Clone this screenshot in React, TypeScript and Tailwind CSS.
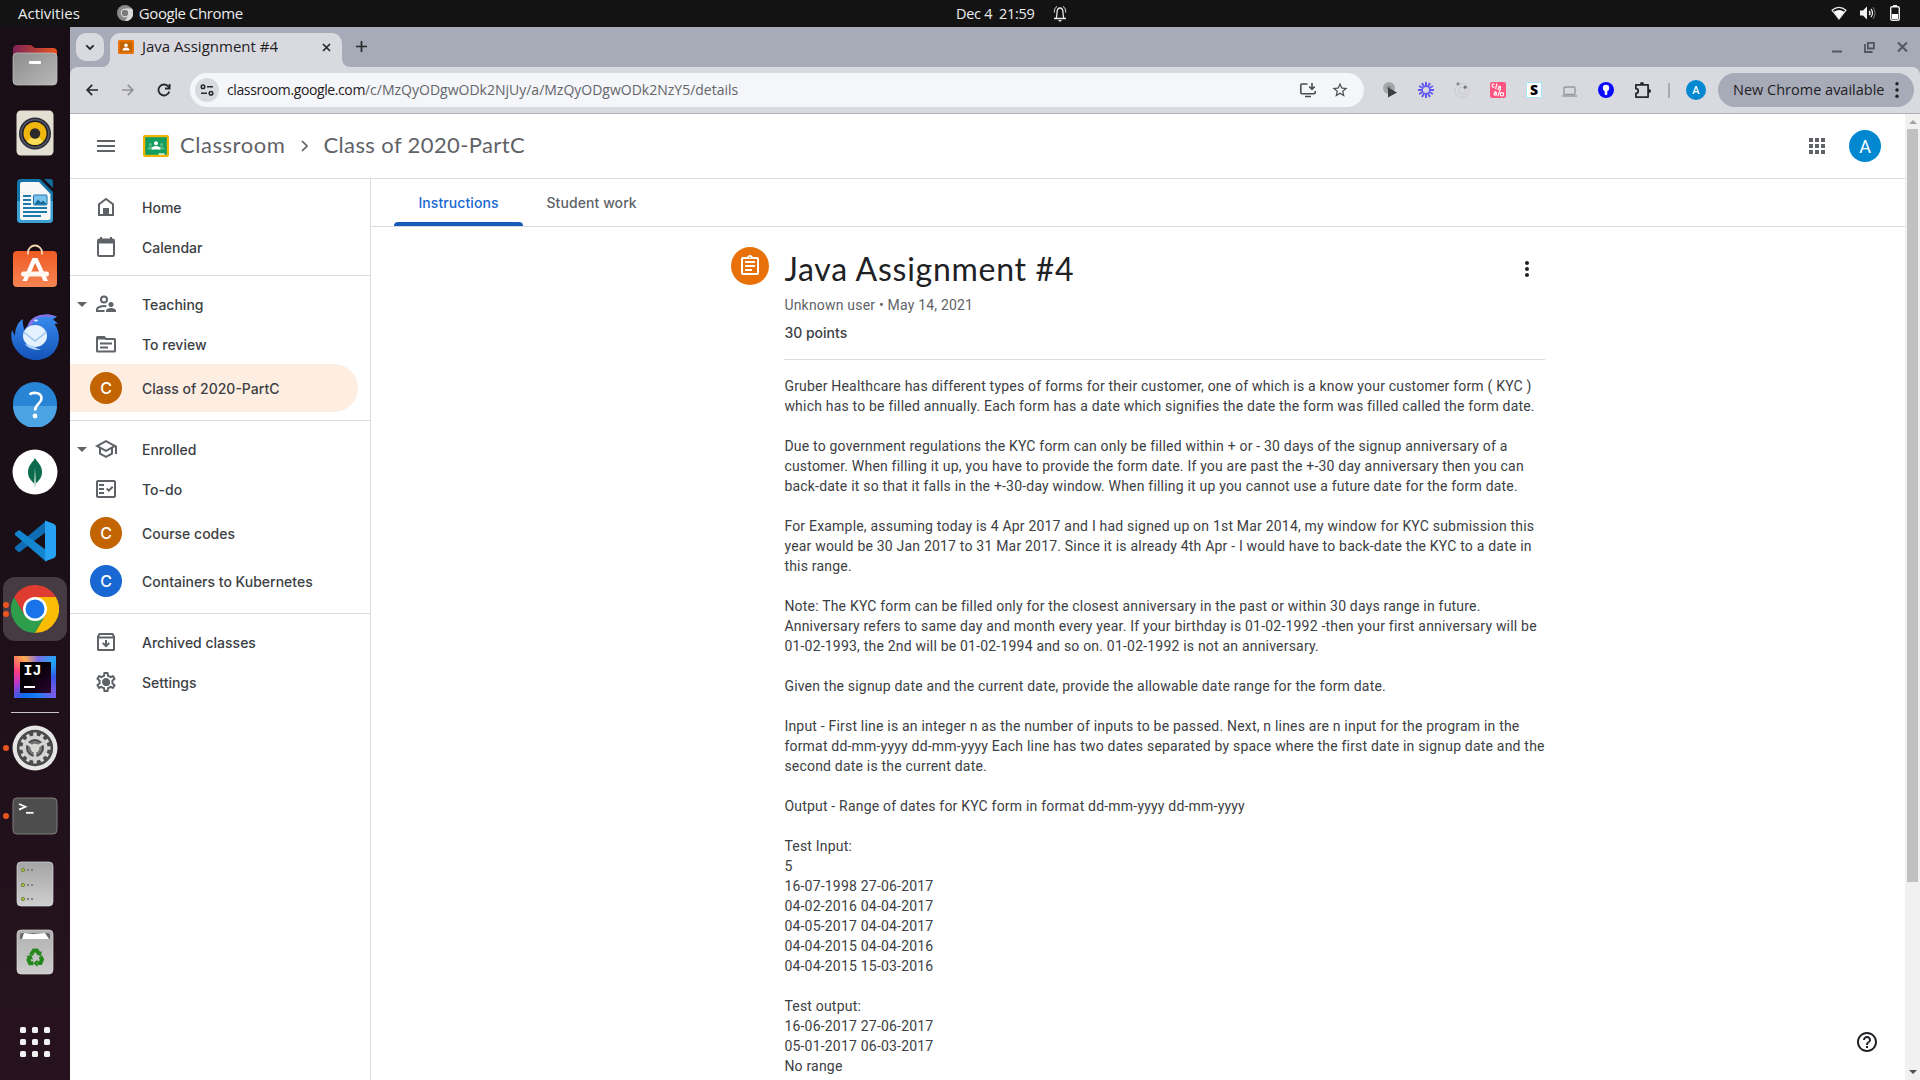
import React from "react";
import {
  MdApps,
  MdMenu,
  MdMoreVert,
  MdOutlineAssignment,
  MdOutlineFactCheck,
  MdOutlineSchool,
  MdOutlineSettings,
  MdStarOutline,
  MdHelpOutline,
  MdArrowDropDown,
} from "react-icons/md";

/* ---------- Dock ---------- */

function FilesIcon() {
  return (
    <svg width="46" height="42" viewBox="0 0 46 42">
      <defs>
        <linearGradient id="fi1" x1="0" x2="1"><stop offset="0" stopColor="#7d2357" /><stop offset="1" stopColor="#ea5420" /></linearGradient>
        <linearGradient id="fi2" x1="0" y1="0" x2="1" y2="1"><stop offset="0" stopColor="#8c8c8c" /><stop offset="1" stopColor="#b9b9b9" /></linearGradient>
      </defs>
      <path d="M1 5q0-4 4-4h13q2 0 3 1.500t3 1.500h17q4 0 4 4v14H1z" fill="url(#fi1)" />
      <rect x="1" y="9" width="44" height="32" rx="4" fill="url(#fi2)" stroke="#c4c4c4" strokeWidth=".7" />
      <rect x="17" y="17" width="12" height="3" rx="1" fill="#fff" />
    </svg>
  );
}

function SpeakerIcon() {
  return (
    <svg width="38" height="46" viewBox="0 0 38 46">
      <rect x=".5" y=".5" width="37" height="45" rx="4.500" fill="#e3dfd2" />
      <circle cx="19" cy="23.500" r="16" fill="#2c2d3a" />
      <circle cx="19" cy="23.500" r="14.500" fill="#555767" />
      <circle cx="19" cy="23.500" r="13" fill="#1d1e28" />
      <circle cx="19" cy="23.500" r="11.500" fill="#efb70e" />
      <path d="M11 31.500a11.500 11.500 0 0 0 16 0L19 23.500z" fill="#fadb55" />
      <circle cx="19" cy="23.500" r="5.200" fill="#2a2a2a" />
    </svg>
  );
}

function WriterIcon() {
  return (
    <svg width="38" height="46" viewBox="0 0 38 46">
      <path d="M5 1h19l13 13v27q0 4-4 4H5q-4 0-4-4V5q0-4 4-4z" fill="#1474a8" />
      <path d="M1 23h36v18q0 4-4 4H5q-4 0-4-4z" fill="#3ba0d2" />
      <path d="M28 1h6q3 0 3 3v6z" fill="#136a9a" />
      <path d="M6 4h17l11.500 12v24q0 2-2 2H6q-2 0-2-2V6q0-2 2-2z" fill="#f7f7f7" />
      <path d="M7 18h8M7 22h8M7 26h8M7 30h24M7 34h24M7 38h18" stroke="#1b79ad" strokeWidth="2" />
      <rect x="17.500" y="17" width="13.500" height="10" rx="1" fill="#7cc4ec" stroke="#1b79ad" />
      <path d="M18 26.500l4-5 3 3 2-2 4 4z" fill="#14699c" />
    </svg>
  );
}

function SoftwareIcon() {
  return (
    <svg className="-mt-[6px]" width="46" height="44" viewBox="0 0 46 44">
      <defs><linearGradient id="sw" x1="0" y1="0" x2="0" y2="1"><stop offset="0" stopColor="#f05a24" /><stop offset="1" stopColor="#f58553" /></linearGradient></defs>
      <rect x="1" y="7" width="44" height="36" rx="4" fill="url(#sw)" />
      <path d="M16 10.500V8.500a7 7 0 0 1 14 0v2" fill="none" stroke="#f3d7b0" strokeWidth="1.800" />
      <path d="M20.500 14h5L36 37h-4.500L23.200 19 15 37h-4.500z" fill="#fff" />
      <rect x="9" y="27.500" width="28" height="5" rx="2.500" fill="#fff6f0" />
    </svg>
  );
}

function ThunderbirdIcon() {
  return (
    <svg width="48" height="48" viewBox="0 0 48 48">
      <defs><linearGradient id="tb" x1="0" y1="0" x2="0" y2="1"><stop offset="0" stopColor="#3b8df0" /><stop offset="1" stopColor="#1352b8" /></linearGradient></defs>
      <path d="M17 12C20 4 28 1 38 1.500l8 2-4 3 5 4-3.500.500C50 20 49 32 43 39c-8 10-26 11-35 1C1 33-1 24 1 17l3 6C4 15 7 9 12 6c-1 5 1 7 1 11z" fill="url(#tb)" />
      <path d="M17 12C20 4 28 1 38 1.500l8 2-8 .500c-9-1-14 1-16 6l-4 4z" fill="#8b6fe0" />
      <ellipse cx="24" cy="23" rx="12" ry="11" fill="#e4f1ff" />
      <path d="M12.500 19L24 28l11.500-9" fill="none" stroke="#9cc4ee" strokeWidth="1.500" />
      <path d="M14 31c3 4 8 6 16 6-4-1-6-3-7-4z" fill="#b4d4fa" />
      <ellipse cx="25" cy="7.500" rx="2" ry="1" fill="#d8ecff" />
    </svg>
  );
}

function HelpDockIcon() {
  return (
    <svg className="-mt-[2px]" width="46" height="46" viewBox="0 0 46 46">
      <circle cx="23" cy="23" r="22" fill="#2885d6" />
      <path d="M1 25a22 22 0 0 0 44 0z" fill="#4ba3e3" />
      <path d="M17.500 13.500c2.500-2.200 12-3 12 4 0 5-6.500 5.500-6.500 12" fill="none" stroke="#fff" strokeWidth="2.600" />
      <circle cx="23" cy="35" r="2.400" fill="#fff" />
    </svg>
  );
}

function MongoIcon() {
  return (
    <svg className="-mt-[2px]" width="46" height="46" viewBox="0 0 46 46">
      <circle cx="23" cy="23" r="22.500" fill="#fff" />
      <path d="M23 9c2 4 7 7 7 14 0 6-3.500 9-6.300 11.500h-1.400C19.500 32 16 29 16 23c0-7 5-10 7-14z" fill="#0b6b4c" />
      <path d="M23 18l1 16-.6 4h-.8l-.6-4z" fill="#b6cfc2" />
    </svg>
  );
}

function CodeIcon() {
  return (
    <svg width="42" height="42" viewBox="0 0 42 42">
      <path d="M1 29l4 3.500L32 12V1L1 27z" fill="#0f6db3" />
      <path d="M1 13l4-3L32 30v11.500L1 15z" fill="#1485cf" />
      <path d="M31 .5l9 3.500q2 1 2 3v28q0 2-2 3l-9 3.500z" fill="#27a2f2" />
    </svg>
  );
}

function ChromeIcon() {
  return (
    <svg width="48" height="48" viewBox="0 0 48 48">
      <path d="M3.200 12A24 24 0 0 0 24 48L34.400 30 24 24l-10.400 6z" fill="#2e9e4c" />
      <path d="M24 12h20.800A24 24 0 0 1 24 48l10.400-18z" fill="#fbbc05" />
      <path d="M3.200 12A24 24 0 0 1 44.800 12H24L13.600 30z" fill="#de3c30" />
      <circle cx="24" cy="24" r="12" fill="#fff" />
      <circle cx="24" cy="24" r="9.500" fill="#1a73e8" />
    </svg>
  );
}

function IdeaIcon() {
  return (
    <div className="flex h-[42px] w-[42px] items-center justify-center bg-[conic-gradient(from_90deg,#3457e6,#7b5be8,#1d7df2,#0c6bf0,#b936c9,#fb3e7e,#ffab4d,#7a6ae8,#1fa8f5,#3457e6)]">
      <div className="flex h-[31px] w-[31px] flex-col items-start bg-gradient-to-br from-black to-[#2b0630] px-[4px] pt-[3px]">
        <span className="font-['Liberation_Mono'] text-[15px] leading-[14px] font-bold text-white">IJ</span>
        <span className="mt-[7px] h-[2px] w-[11px] bg-white" />
      </div>
    </div>
  );
}

const SPOKES = [0, 30, 60, 90, 120, 150, 180, 210, 240, 270, 300, 330];

function GearDockIcon() {
  return (
    <svg width="46" height="46" viewBox="-23 -23 46 46">
      <circle r="22.500" fill="#e6e6e4" />
      <circle r="18.200" fill="#4b4b4b" />
      {SPOKES.map((a) => (
        <rect key={a} x="-1.700" y="-15.500" width="3.400" height="5" fill="#d8d8d6" transform={`rotate(${a})`} />
      ))}
      <circle r="10.800" fill="none" stroke="#d2d2d0" strokeWidth="3.600" />
      <circle r="6" fill="none" stroke="#77777a" strokeWidth="2" />
      <circle r="4.600" fill="#d8d8d6" />
      {[60, 180, 300].map((a) => (
        <rect key={a} x="-1.300" y="-10" width="2.600" height="7" fill="#d8d8d6" transform={`rotate(${a})`} />
      ))}
    </svg>
  );
}

function TerminalIcon() {
  return (
    <svg width="46" height="38" viewBox="0 0 46 38">
      <rect x="1" y="1" width="44" height="36" rx="4" fill="#4d4d4d" stroke="#7e7e7a" />
      <path d="M7 7l6.500 2.800L7 12.600" fill="none" stroke="#fff" strokeWidth="1.700" />
      <path d="M14 15.800h7.500" stroke="#fff" strokeWidth="1.800" />
    </svg>
  );
}

function DriveIcon() {
  return (
    <svg width="38" height="46" viewBox="0 0 38 46">
      <defs><linearGradient id="dr" x1="0" y1="0" x2="0" y2="1"><stop offset="0" stopColor="#a4a4a4" /><stop offset="1" stopColor="#cfcfcf" /></linearGradient></defs>
      <rect x="1" y="1" width="36" height="44" rx="4" fill="url(#dr)" stroke="#d8d8d8" strokeWidth=".7" />
      {[9, 24, 38].map((y) => (
        <g key={y}>
          <circle cx="7" cy={y} r="1.700" fill="#9fc13c" stroke="#667a32" strokeWidth=".8" />
          <rect x="11" y={y - 1} width="2" height="2" fill="#808080" />
          <rect x="15" y={y - 1} width="2" height="2" fill="#808080" />
        </g>
      ))}
    </svg>
  );
}

function TrashIcon() {
  return (
    <svg width="38" height="46" viewBox="0 0 38 46">
      <defs><linearGradient id="tr" x1="0" y1="0" x2="0" y2="1"><stop offset="0" stopColor="#b0b0b0" /><stop offset="1" stopColor="#cdcdcd" /></linearGradient></defs>
      <rect x="1" y="1" width="36" height="44" rx="4" fill="url(#tr)" stroke="#d8d8d8" strokeWidth=".7" />
      <path d="M4 10V6q0-2 2-2h26q2 0 2 2v4z" fill="#6b6b6b" />
      <path d="M6 10L8 4l9 1 12-1 4 6z" fill="#fff" />
      <g fill="none" stroke="#26871c" strokeWidth="4">
        <path d="M14.800 26l3-4.500h3l2 3" />
        <path d="M24.500 27.500l1.500 3-1.500 3.500h-3" />
        <path d="M17.500 34.300h-3.500l-1.500-3.500 1.500-3" />
      </g>
      <path d="M26 22l-1 5.500-5-2.500zM21.500 30.500v7.500l-4-3.800zM10 27l5.500-1 1.500 5z" fill="#26871c" />
    </svg>
  );
}

type DockEntry = { icon: React.ReactNode; dots?: number; active?: boolean };

const DOCK_TOP: DockEntry[] = [
  { icon: <FilesIcon /> },
  { icon: <SpeakerIcon /> },
  { icon: <WriterIcon /> },
  { icon: <SoftwareIcon /> },
  { icon: <ThunderbirdIcon /> },
  { icon: <HelpDockIcon /> },
  { icon: <MongoIcon /> },
  { icon: <CodeIcon /> },
  { icon: <ChromeIcon />, dots: 2, active: true },
  { icon: <IdeaIcon /> },
];

const DOCK_BOTTOM: DockEntry[] = [
  { icon: <GearDockIcon />, dots: 1 },
  { icon: <TerminalIcon />, dots: 1 },
  { icon: <DriveIcon /> },
  { icon: <TrashIcon /> },
];

function DockSlot({ icon, dots = 0, active }: DockEntry) {
  return (
    <div className="relative flex h-[68px] w-full shrink-0 items-center justify-center">
      <div className={active ? "flex h-16 w-16 items-center justify-center rounded-xl bg-[#463b42]" : "flex h-16 w-16 items-center justify-center"}>{icon}</div>
      {dots > 0 && (
        <div className="absolute inset-y-0 left-[3px] flex flex-col items-center justify-center gap-[3px]">
          {Array.from({ length: dots }, (_, i) => (
            <span key={i} className="h-[6px] w-[6px] rounded-full bg-[#e95420]" />
          ))}
        </div>
      )}
    </div>
  );
}

function Dock() {
  return (
    <aside className="flex w-[70px] shrink-0 flex-col items-center bg-gradient-to-b from-[#190e15] via-[#1b0f17] to-[#27131f] pt-[4px]">
      {DOCK_TOP.map((d, i) => <DockSlot key={i} {...d} />)}
      <div className="mt-[1px] mb-[1px] h-px w-12 shrink-0 bg-[#c6c3c5]" />
      {DOCK_BOTTOM.map((d, i) => <DockSlot key={i} {...d} />)}
      <div className="mt-auto mb-[23px] grid grid-cols-3 gap-[6px]">
        {Array.from({ length: 9 }, (_, i) => <span key={i} className="h-[6px] w-[6px] rounded-[1.5px] bg-[#f2f2f2]" />)}
      </div>
    </aside>
  );
}

/* ---------- Desktop top bar ---------- */

function TopBar() {
  return (
    <header className="relative flex h-[27px] shrink-0 items-center bg-[#131313] font-['Open_Sans',sans-serif] text-[15px] leading-[27px] text-[#ececec]">
      <span className="-mt-px ml-[18px]">Activities</span>
      <svg className="-mt-px ml-[37px]" width="16" height="16" viewBox="0 0 16 16">
        <circle cx="8" cy="8" r="8" fill="#8b8b8b" />
        <path d="M8 3.500h7A8 8 0 0 1 8 16l3.500-6z" fill="#d9d9d9" />
        <circle cx="8" cy="8" r="4.200" fill="#e4e4e4" />
        <circle cx="8" cy="8" r="3.200" fill="#7a7a7a" />
      </svg>
      <span className="-mt-px ml-[6px] tracking-[-0.42px]">Google Chrome</span>
      <div className="absolute left-[956px] flex h-full items-center">
        <span className="-mt-px text-[14.500px] tracking-[-0.3px] whitespace-pre">Dec 4  21:59</span>
        <svg className="-mt-px ml-[18px]" width="14" height="17" viewBox="0 0 14 17" fill="none" stroke="#e8e8e8">
          <path d="M1 13.500h12M2.800 13.500C4 12 3.800 10 4 7.500c.2-6 5.800-6 6 0 .2 2.500 0 4.500 1.200 6" strokeWidth="1.300" />
          <path d="M1.300 7.500C1.200 4.500 2 2.500 4 1.500M12.700 7.500C12.800 4.500 12 2.500 10 1.500" />
          <path d="M5 15h4l-2 2z" fill="#e8e8e8" stroke="none" />
        </svg>
      </div>
      <div className="-mt-px ml-auto flex items-center pr-[20px]">
        <svg width="16" height="14" viewBox="0 0 16 14">
          <path d="M1 4.200q7-5.800 14 0L8 13z" fill="none" stroke="#eee" strokeWidth="1.200" />
          <path d="M2.800 5.800q5.200-3.600 10.400 0L8 13z" fill="#fff" />
        </svg>
        <svg className="ml-[13px]" width="16" height="14" viewBox="0 0 16 14" fill="none" stroke="#eee">
          <path d="M0 4.500h3L7 .5v13l-4-4H0z" fill="#f2f2f2" stroke="none" />
          <path d="M9.200 4.800q1.600 2.200 0 4.400" strokeWidth="1.400" />
          <path d="M11 2.800q3 4.200 0 8.400" strokeWidth="1.200" />
          <path d="M13 1q4 6 0 12" stroke="#777" />
        </svg>
        <svg className="ml-[14px]" width="10" height="16" viewBox="0 0 10 16">
          <rect x=".7" y="1.700" width="8.600" height="13.600" rx="1.500" fill="none" stroke="#eee" strokeWidth="1.400" />
          <rect x="3" y="0" width="4" height="1.500" fill="#eee" />
          <rect x="2" y="9" width="6" height="5" fill="#fff" />
        </svg>
      </div>
    </header>
  );
}

/* ---------- Browser chrome ---------- */

function TabStrip() {
  return (
    <div className="flex h-[40px] shrink-0 items-end bg-[#a7abb8]">
      <div className="mb-[6px] ml-[6px] flex h-[28px] w-[28px] items-center justify-center rounded-[10px] bg-[#d9dae0]">
        <svg width="10" height="7" viewBox="0 0 10 7" fill="none" stroke="#27282b" strokeWidth="1.800"><path d="M1.300 1.300L5 5l3.700-3.700" /></svg>
      </div>
      <svg className="-ml-[2px]" width="8" height="8" viewBox="0 0 8 8"><path d="M8 0v8H0a8 8 0 0 0 8-8z" fill="#d9dae0" /></svg>
      <div className="flex h-[34px] w-[232px] items-center rounded-t-[10px] bg-[#d9dae0] pb-[6px] pl-[8px]">
        <svg width="16" height="14" viewBox="0 0 16 14">
          <rect width="16" height="14" rx="1.500" fill="#e8710a" />
          <rect x="2" y="2" width="12" height="10" fill="#c26401" />
          <circle cx="8" cy="5.200" r="1.700" fill="#fff" />
          <path d="M4.500 10.500q0-3 3.500-3t3.500 3z" fill="#fff" />
        </svg>
        <span className="-mt-[2px] ml-2 font-['Open_Sans',sans-serif] text-[15px] leading-none text-[#1f2023]">Java Assignment #4</span>
        <svg className="mr-[11px] ml-auto" width="9" height="9" viewBox="0 0 9 9" stroke="#27282b" strokeWidth="1.700"><path d="M1 1l7 7M8 1L1 8" /></svg>
      </div>
      <svg width="8" height="8" viewBox="0 0 8 8"><path d="M0 0v8h8a8 8 0 0 1-8-8z" fill="#d9dae0" /></svg>
      <svg className="mb-[15px] ml-[6px]" width="11" height="11" viewBox="0 0 11 11" stroke="#27282b" strokeWidth="1.700"><path d="M5.500 0v11M0 5.500h11" /></svg>
      <div className="mb-[14px] ml-auto flex items-end">
        <svg width="10" height="12" viewBox="0 0 10 12"><path d="M0 10.500h10" stroke="#53565e" strokeWidth="2" /></svg>
        <svg className="ml-[22px]" width="11" height="12" viewBox="0 0 11 12" fill="none" stroke="#53565e" strokeWidth="1.800"><path d="M3.900 1.900h6v5.600h-6zM1 3v8h7.500" /></svg>
        <svg className="mr-[12px] ml-[22px]" width="11" height="12" viewBox="0 0 11 12" stroke="#53565e" strokeWidth="2"><path d="M1 1.500l9 9M10 1.500l-9 9" /></svg>
      </div>
    </div>
  );
}

function Extensions() {
  return (
    <div className="ml-[19px] flex items-center">
      <svg width="15" height="16" viewBox="0 0 15 16">
        <circle cx="6" cy="6" r="6" fill="#a6a7ab" />
        <circle cx="6" cy="6" r="2.300" fill="#85868a" />
        <path d="M5 5.500l9 5-9 5z" fill="#3c3d40" />
      </svg>
      <svg className="ml-[20px]" width="16" height="16" viewBox="-8 -8 16 16">
        {SPOKES.map((a) => <path key={a} d="M0-8v5" stroke="#6259f5" strokeWidth="2" transform={`rotate(${a})`} />)}
      </svg>
      <svg className="ml-[20px]" width="16" height="16" viewBox="0 0 16 16" fill="none" stroke="#c6c7cb">
        <circle cx="8" cy="8.500" r="7" strokeWidth=".8" />
        <circle cx="8" cy="8.500" r="3.500" strokeWidth=".8" />
        <circle cx="4" cy="1.800" r="1.600" fill="#8a8b8f" stroke="none" />
        <circle cx="11.200" cy="5.200" r="1.600" fill="#77787c" stroke="none" />
      </svg>
      <svg className="ml-[20px]" width="16" height="16" viewBox="0 0 16 16" fill="none" stroke="#fff" strokeWidth="1.100">
        <rect width="16" height="16" rx="2" fill="#ff5580" stroke="none" />
        <path d="M4.500 2.300q-2.500-.6-2.500 1.400t2.300 1.200M7 1.500L5.500 7M8 4.500q2.500-.8 2.500.8v2.200q-2.500.6-2.500-.8t2.500-.8" />
        <path d="M4 10q2.300-.8 2.300.8V13q-2.300.5-2.300-.9t2.300-.8M10 8.500L7.800 14" />
        <circle cx="12" cy="12.300" r="1.700" />
      </svg>
      <div className="ml-[20px] flex h-[16px] w-[16px] items-center justify-center border border-[#a5e6fb] bg-white font-['Open_Sans'] text-[14px] leading-none font-extrabold text-black">S</div>
      <svg className="mt-[3px] ml-[20px]" width="15" height="11" viewBox="0 0 15 11" fill="none" stroke="#97989c" strokeWidth="1.400"><rect x="2" y="1" width="11" height="7.500" rx="1" /><path d="M0 10h15" /></svg>
      <svg className="ml-[21px]" width="16" height="16" viewBox="0 0 16 16">
        <circle cx="8" cy="8" r="8" fill="#0a0aff" />
        <circle cx="8" cy="6" r="3.200" fill="#fff" />
        <rect x="6.700" y="7" width="2.600" height="6" rx="1" fill="#fff" />
      </svg>
      <svg className="-mt-[2px] ml-[20px]" width="17" height="17" viewBox="0 0 17 17">
        <path d="M1.900 3.900h12.200v12.200H1.900v-3.800a2.300 2.300 0 0 0 0-4.600z" fill="none" stroke="#27282b" strokeWidth="1.800" strokeLinejoin="round" />
        <path d="M6 3a2 2 0 0 1 4 0zM15 8a2 2 0 0 1 0 4z" fill="#27282b" />
      </svg>
      <div className="ml-[17px] h-[15px] w-[2px] bg-[#a7abb8]" />
      <div className="ml-[16px] flex h-[20px] w-[20px] items-center justify-center rounded-full bg-[#0288d1] font-['Roboto'] text-[11px] leading-none font-medium text-white">A</div>
      <div className="ml-[12px] flex h-[34px] w-[196px] items-center rounded-full bg-[#a7abb8] pl-[15px] font-['Open_Sans'] text-[14.500px] leading-none whitespace-nowrap text-[#1f2023]">
        New Chrome available
        <svg className="ml-[11px]" width="4" height="18" viewBox="0 0 4 18" fill="#1f2023"><circle cx="2" cy="2.800" r="1.700" /><circle cx="2" cy="9" r="1.700" /><circle cx="2" cy="15.200" r="1.700" /></svg>
      </div>
    </div>
  );
}

function Toolbar() {
  return (
    <div className="h-[47px] shrink-0 bg-[#a7abb8]">
      <div className="flex h-[47px] items-center rounded-t-[8px] border-b border-[#aeafb4] bg-[#d9dae0] pr-[6px] pl-[16px]">
        <svg width="12" height="12" viewBox="0 0 12 12" fill="none" stroke="#27282b" strokeWidth="1.700"><path d="M12 6H1.500M6.200.8L1.200 6l5 5.200" /></svg>
        <svg className="ml-[24px]" width="12" height="12" viewBox="0 0 12 12" fill="none" stroke="#929398" strokeWidth="1.700"><path d="M0 6h10.500M5.800.8l5 5.200-5 5.200" /></svg>
        <svg className="ml-[23px]" width="14" height="14" viewBox="0 0 14 14" fill="none" stroke="#27282b" strokeWidth="1.800"><path d="M12.300 8.500A5.500 5.500 0 1 1 11 3.200L12.500 5" /><path d="M12.600 1v4.500H8" /></svg>
        <div className="ml-[19px] flex h-[34px] w-[1174px] items-center rounded-full bg-[#f5f6f9] pl-[5px] font-['Open_Sans',sans-serif] text-[14px] leading-none">
          <div className="flex h-[24px] w-[24px] items-center justify-center rounded-full bg-[#d9dae0]">
            <svg width="14" height="12" viewBox="0 0 14 12" fill="none" stroke="#27282b" strokeWidth="1.500"><circle cx="3" cy="2.800" r="1.800" /><path d="M7 2.800h6M1 9.200h6" /><circle cx="11" cy="9.200" r="1.800" /></svg>
          </div>
          <span className="ml-[8px] tracking-[-0.39px] text-[#1f2023]">classroom.google.com</span>
          <span className="text-[#63656b]">/c/MzQyODgwODk2NjUy/a/MzQyODgwODk2NzY5/details</span>
          <svg className="ml-auto" width="16" height="15" viewBox="0 0 16 15" fill="none" stroke="#4a4c51" strokeWidth="1.600"><path d="M7.500 1H2Q.8 1 .8 2.200v7.300q0 1.200 1.200 1.200h12q1.200 0 1.200-1.200V8M5 13.500h6" /><path d="M12 0v6M9.200 3.500L12 6.300l2.800-2.800" /></svg>
          <MdStarOutline className="mr-[15px] ml-[15px] text-[#4a4c51]" size={18} />
        </div>
        <Extensions />
      </div>
    </div>
  );
}

/* ---------- Classroom ---------- */

function ClassroomLogo() {
  return (
    <svg width="26" height="22" viewBox="0 0 26 22">
      <rect width="26" height="22" rx="2" fill="#f4b400" />
      <rect x="2.200" y="2.200" width="21.600" height="17.600" fill="#149d5c" />
      <g fill="#57bb8a"><circle cx="7.500" cy="9.500" r="1.500" /><circle cx="18.500" cy="9.500" r="1.500" /><path d="M4.500 14.500q0-3 3-3t3 3zM15.500 14.500q0-3 3-3t3 3z" /></g>
      <circle cx="13" cy="8.200" r="2" fill="#fff" />
      <path d="M8.500 14.500q0-3.600 4.500-3.600t4.500 3.600z" fill="#fff" />
      <rect x="15.500" y="18.300" width="6" height="1.600" fill="#e6efe9" />
    </svg>
  );
}

function PageHeader() {
  return (
    <div className="flex h-[65px] shrink-0 items-center border-b border-[#dadce0] bg-white font-['Lato',sans-serif] text-[22px] leading-none text-[#5f6368]">
      <MdMenu className="ml-[24px]" size={24} />
      <div className="ml-[25px]"><ClassroomLogo /></div>
      <span className="-mt-[2px] ml-[11px] tracking-[0.55px]">Classroom</span>
      <svg className="ml-[16px]" width="7" height="12" viewBox="0 0 7 12" fill="none" stroke="#5f6368" strokeWidth="1.700"><path d="M1 1l5 5-5 5" /></svg>
      <span className="-mt-[2px] ml-[15px] tracking-[0.39px]">Class of 2020-PartC</span>
      <MdApps className="ml-auto text-[#5f6368]" size={24} />
      <div className="mr-[24px] ml-[20px] flex h-[32px] w-[32px] items-center justify-center rounded-full bg-[#0288d1] pt-px font-['Roboto'] text-[18px] leading-none text-white">A</div>
    </div>
  );
}

function HomeIcon() {
  return (
    <svg width="24" height="24" viewBox="0 0 24 24"><path d="M5 9.200L12 4l7 5.200V20H5z" fill="none" stroke="#5f6368" strokeWidth="2" /><path d="M9 13h6v7H9z" fill="#5f6368" /></svg>
  );
}
function CalendarIcon() {
  return (
    <svg width="24" height="24" viewBox="0 0 24 24"><rect x="4" y="4.500" width="16" height="16.500" rx="1.200" fill="none" stroke="#5f6368" strokeWidth="2" /><path d="M4 4h16v4.500H4zM6 2h2v3H6zM16 2h2v3h-2z" fill="#5f6368" /></svg>
  );
}
function TeachingIcon() {
  return (
    <svg width="24" height="24" viewBox="0 0 24 24" fill="#5f6368">
      <circle cx="10" cy="7.500" r="3" fill="none" stroke="#5f6368" strokeWidth="2" />
      <circle cx="17" cy="12.500" r="2.500" />
      <path d="M12 20v-1.200c0-1.800 2.700-2.800 5-2.800s5 1 5 2.800V20z" />
      <path d="M10.500 19H3v-1.800c0-1.700 4-3.200 7-3.200.8 0 1.600.1 2.400.3" fill="none" stroke="#5f6368" strokeWidth="2" />
    </svg>
  );
}
function ReviewIcon() {
  return (
    <svg width="24" height="24" viewBox="0 0 24 24" fill="none" stroke="#5f6368" strokeWidth="2"><path d="M3 5.500q0-.5.500-.5H10l2 2h8.500q.5 0 .5.500V19q0 .5-.5.500h-17Q3 19.500 3 19zM6 11.500h12M6 15.500h8" /><path d="M3 6h8" strokeWidth="3" /></svg>
  );
}
function ArchiveIcon() {
  return (
    <svg width="24" height="24" viewBox="0 0 24 24" fill="none" stroke="#5f6368" strokeWidth="2"><path d="M4 6.500L5.500 4h13L20 6.500V19.500q0 .5-.5.500h-15Q4 20 4 19.500zM4 7.500h16M12 10v6M8.800 13l3.200 3.200 3.200-3.200" /></svg>
  );
}
function CogIcon() {
  return (
    <div className="grid place-items-center">
      <MdOutlineSettings className="col-start-1 row-start-1 text-[#5f6368]" size={24} />
      <span className="col-start-1 row-start-1 h-[7px] w-[7px] rounded-full bg-[#5f6368]" />
    </div>
  );
}

function Avatar({ color }: { color: "orange" | "blue" }) {
  return (
    <div className={`${color === "orange" ? "bg-[#c26401]" : "bg-[#1967d2]"} flex h-8 w-8 items-center justify-center rounded-full pb-px text-[16px] leading-none text-white`}>C</div>
  );
}

type RowProps = { icon: React.ReactNode; label: string; tall?: boolean; caret?: boolean; active?: boolean };

function Row({ icon, label, tall, caret, active }: RowProps) {
  return (
    <div className={`flex items-center ${tall ? "h-12" : "h-10"} ${active ? "mr-3 rounded-r-full bg-[#feeee2]" : ""}`}>
      <div className="flex w-5 justify-end">{caret && <MdArrowDropDown className="-mr-[4px] shrink-0 text-[#5f6368]" size={24} />}</div>
      <div className="flex w-8 items-center justify-center">{icon}</div>
      <span className="ml-5 pt-px leading-none whitespace-nowrap">{label}</span>
    </div>
  );
}

function Sidebar() {
  return (
    <nav className="flex w-[301px] shrink-0 flex-col divide-y divide-[#dadce0] border-r border-[#dadce0] bg-white font-['Inter',sans-serif] text-[14px] font-medium text-[#3c4043]">
      <div className="py-2">
        <Row icon={<HomeIcon />} label="Home" />
        <Row icon={<CalendarIcon />} label="Calendar" />
      </div>
      <div className="py-2">
        <Row icon={<TeachingIcon />} label="Teaching" caret />
        <Row icon={<ReviewIcon />} label="To review" />
        <Row icon={<Avatar color="orange" />} label="Class of 2020-PartC" tall active />
      </div>
      <div className="py-2">
        <Row icon={<MdOutlineSchool className="text-[#5f6368]" size={24} />} label="Enrolled" caret />
        <Row icon={<MdOutlineFactCheck className="text-[#5f6368]" size={24} />} label="To-do" />
        <Row icon={<Avatar color="orange" />} label="Course codes" tall />
        <Row icon={<Avatar color="blue" />} label="Containers to Kubernetes" tall />
      </div>
      <div className="py-2">
        <Row icon={<ArchiveIcon />} label="Archived classes" />
        <Row icon={<CogIcon />} label="Settings" />
      </div>
    </nav>
  );
}

const BODY = `Gruber Healthcare has different types of forms for their customer, one of which is a know your customer form ( KYC )
which has to be filled annually. Each form has a date which signifies the date the form was filled called the form date.

Due to government regulations the KYC form can only be filled within + or - 30 days of the signup anniversary of a
customer. When filling it up, you have to provide the form date. If you are past the +-30 day anniversary then you can
back-date it so that it falls in the +-30-day window. When filling it up you cannot use a future date for the form date.

For Example, assuming today is 4 Apr 2017 and I had signed up on 1st Mar 2014, my window for KYC submission this
year would be 30 Jan 2017 to 31 Mar 2017. Since it is already 4th Apr - I would have to back-date the KYC to a date in
this range.

Note: The KYC form can be filled only for the closest anniversary in the past or within 30 days range in future.
Anniversary refers to same day and month every year. If your birthday is 01-02-1992 -then your first anniversary will be
01-02-1993, the 2nd will be 01-02-1994 and so on. 01-02-1992 is not an anniversary.

Given the signup date and the current date, provide the allowable date range for the form date.

Input - First line is an integer n as the number of inputs to be passed. Next, n lines are n input for the program in the
format dd-mm-yyyy dd-mm-yyyy Each line has two dates separated by space where the first date in signup date and the
second date is the current date.

Output - Range of dates for KYC form in format dd-mm-yyyy dd-mm-yyyy

Test Input:
5
16-07-1998 27-06-2017
04-02-2016 04-04-2017
04-05-2017 04-04-2017
04-04-2015 04-04-2016
04-04-2015 15-03-2016

Test output:
16-06-2017 27-06-2017
05-01-2017 06-03-2017
No range`;

function Assignment() {
  return (
    <main className="relative flex min-w-0 flex-1 flex-col bg-white">
      <div className="flex h-[48px] shrink-0 border-b border-[#dadce0] pl-[23px] font-['Inter',sans-serif] text-[14px] leading-none font-medium">
        <div className="flex w-[129px] flex-col items-center">
          <span className="flex h-[43px] items-center pt-[4px] tracking-[0.08px] text-[#1967d2]">Instructions</span>
          <span className="h-[4px] w-full rounded-t-[4px] bg-[#185abc]" />
        </div>
        <span className="ml-[23.500px] flex h-[43px] items-center pt-[4px] tracking-[0.08px] text-[#5f6368]">Student work</span>
      </div>
      <div className="flex pt-[20px] pl-[360px]">
        <div className="flex h-[38px] w-[38px] items-center justify-center rounded-full bg-[#e8710a]">
          <MdOutlineAssignment className="text-white" size={24} />
        </div>
        <div className="ml-[15.400px] flex w-[760.600px] flex-col">
          <div className="flex h-[43px] items-center justify-between">
            <h1 className="font-['Lato',sans-serif] text-[32px] leading-[40px] tracking-[0.72px] text-[#202124]">Java Assignment #4</h1>
            <MdMoreVert className="mr-[6px] text-[#202124]" size={24} />
          </div>
          <p className="mt-[5px] font-['Roboto',sans-serif] text-[14px] leading-[20px] tracking-[0.2px] text-[#5f6368]">Unknown user • May 14, 2021</p>
          <p className="mt-[8px] font-['Inter',sans-serif] text-[14px] leading-[20px] font-medium text-[#3c4043]">30 points</p>
          <div className="mt-[16px] h-px bg-[#dadce0]" />
          <div className="mt-[16px] font-['Roboto',sans-serif] text-[14px] leading-[20px] tracking-[0.2px] whitespace-pre text-[#3c4043]">{BODY}</div>
        </div>
      </div>
      <MdHelpOutline className="absolute right-[26px] bottom-[26px] text-[#202124]" size={24} />
    </main>
  );
}

function Scrollbar() {
  return (
    <div className="flex w-[15px] shrink-0 flex-col items-center justify-between bg-[#f1f1f1]">
      <div className="flex flex-col items-center">
        <svg className="mt-[6px] mb-[5px]" width="8" height="4" viewBox="0 0 8 4"><path d="M0 4l4-4 4 4z" fill="#a3a3a3" /></svg>
        <div className="h-[753px] w-[11px] bg-[#c1c1c1]" />
      </div>
      <svg className="mb-[6px]" width="8" height="4" viewBox="0 0 8 4"><path d="M0 0h8L4 4z" fill="#505050" /></svg>
    </div>
  );
}

export default function App() {
  return (
    <div className="flex h-[1080px] w-[1920px] flex-col overflow-hidden bg-white">
      <TopBar />
      <div className="flex min-h-0 flex-1">
        <Dock />
        <div className="flex min-w-0 flex-1 flex-col">
          <TabStrip />
          <Toolbar />
          <div className="flex min-h-0 flex-1">
            <div className="flex min-w-0 flex-1 flex-col">
              <PageHeader />
              <div className="flex min-h-0 flex-1 overflow-hidden">
                <Sidebar />
                <Assignment />
              </div>
            </div>
            <Scrollbar />
          </div>
        </div>
      </div>
    </div>
  );
}
